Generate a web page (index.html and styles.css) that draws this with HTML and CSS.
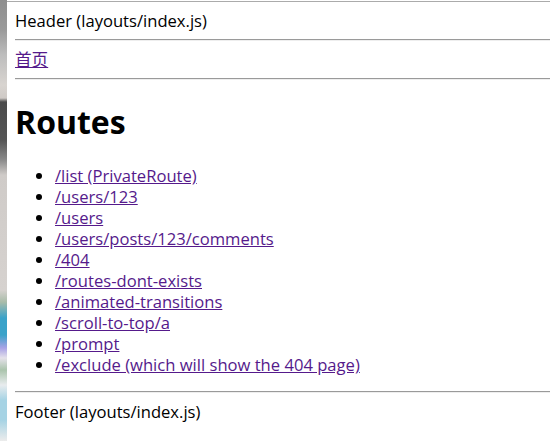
FILE: index.html
```html
<!DOCTYPE html>
<html lang="zh">
<head>
<meta charset="utf-8">
<title>Routes</title>
<link rel="stylesheet" href="styles.css">
</head>
<body>
<div class="page">
  <div class="strip"></div>
  <main class="main">
    <div class="header">Header (layouts/index.js)</div>
    <hr class="rule">
    <nav class="nav"><a class="link" href="#">首页</a></nav>
    <hr class="rule">
    <h1 class="title">Routes</h1>
    <ul class="routes">
      <li><a class="link" href="#">/list (PrivateRoute)</a></li>
      <li><a class="link" href="#">/users/123</a></li>
      <li><a class="link" href="#">/users</a></li>
      <li><a class="link" href="#">/users/posts/123/comments</a></li>
      <li><a class="link" href="#">/404</a></li>
      <li><a class="link" href="#">/routes-dont-exists</a></li>
      <li><a class="link" href="#">/animated-transitions</a></li>
      <li><a class="link" href="#">/scroll-to-top/a</a></li>
      <li><a class="link" href="#">/prompt</a></li>
      <li><a class="link" href="#">/exclude (which will show the 404 page)</a></li>
    </ul>
    <hr class="rule rule-foot">
    <div class="footer">Footer (layouts/index.js)</div>
  </main>
</div>
</body>
</html>
```

FILE: styles.css
```css
html, body {
  margin: 0;
  padding: 0;
  background: #fff;
}
body {
  font-family: "Open Sans", "Noto Sans CJK SC", sans-serif;
  font-size: 16.6px;
  line-height: 21px;
  color: #000;
}
.page {
  display: flex;
  min-height: 441px;
}
.strip {
  width: 7px;
  flex: none;
  background: linear-gradient(to bottom,
    #8e8e8e 0px, #9a9a9a 30px, #bdbdbd 55px, #d8d4d0 85px, #cfcac6 98px,
    #4a4a4a 102px, #555 140px, #8a8a8a 160px, #cfcbc8 175px, #d6d2cf 290px,
    #a9bca9 302px, #3aa2c9 318px, #3aa2c9 335px, #a9a3e6 348px, #e5e2ea 358px,
    #aac4ac 370px, #e8ecee 385px, #a6d3e4 400px, #a6d3e4 420px, #ececec 441px);
}
.main {
  flex: 1;
  min-width: 0;
  margin-top: 1px;
  border-top: 1px solid #ababab;
  padding: 8px 0 0 8px;
}
.header,
.nav {
  margin: 0;
}
.rule {
  border: 0;
  border-top: 1px solid #9a9a9a;
  border-bottom: 1px solid #eeeeee;
  height: 0;
  margin: 8px 0;
}
.link {
  color: #551a8b;
  text-decoration: underline;
}
.title {
  font-size: 32px;
  line-height: 43px;
  font-weight: 700;
  margin: 20px 0 22px;
}
.routes {
  margin: 0 0 16px;
  padding-left: 40px;
}
.rule-foot {
  margin-top: 16px;
  margin-bottom: 8px;
}
.footer {
  margin: 0;
}
```
